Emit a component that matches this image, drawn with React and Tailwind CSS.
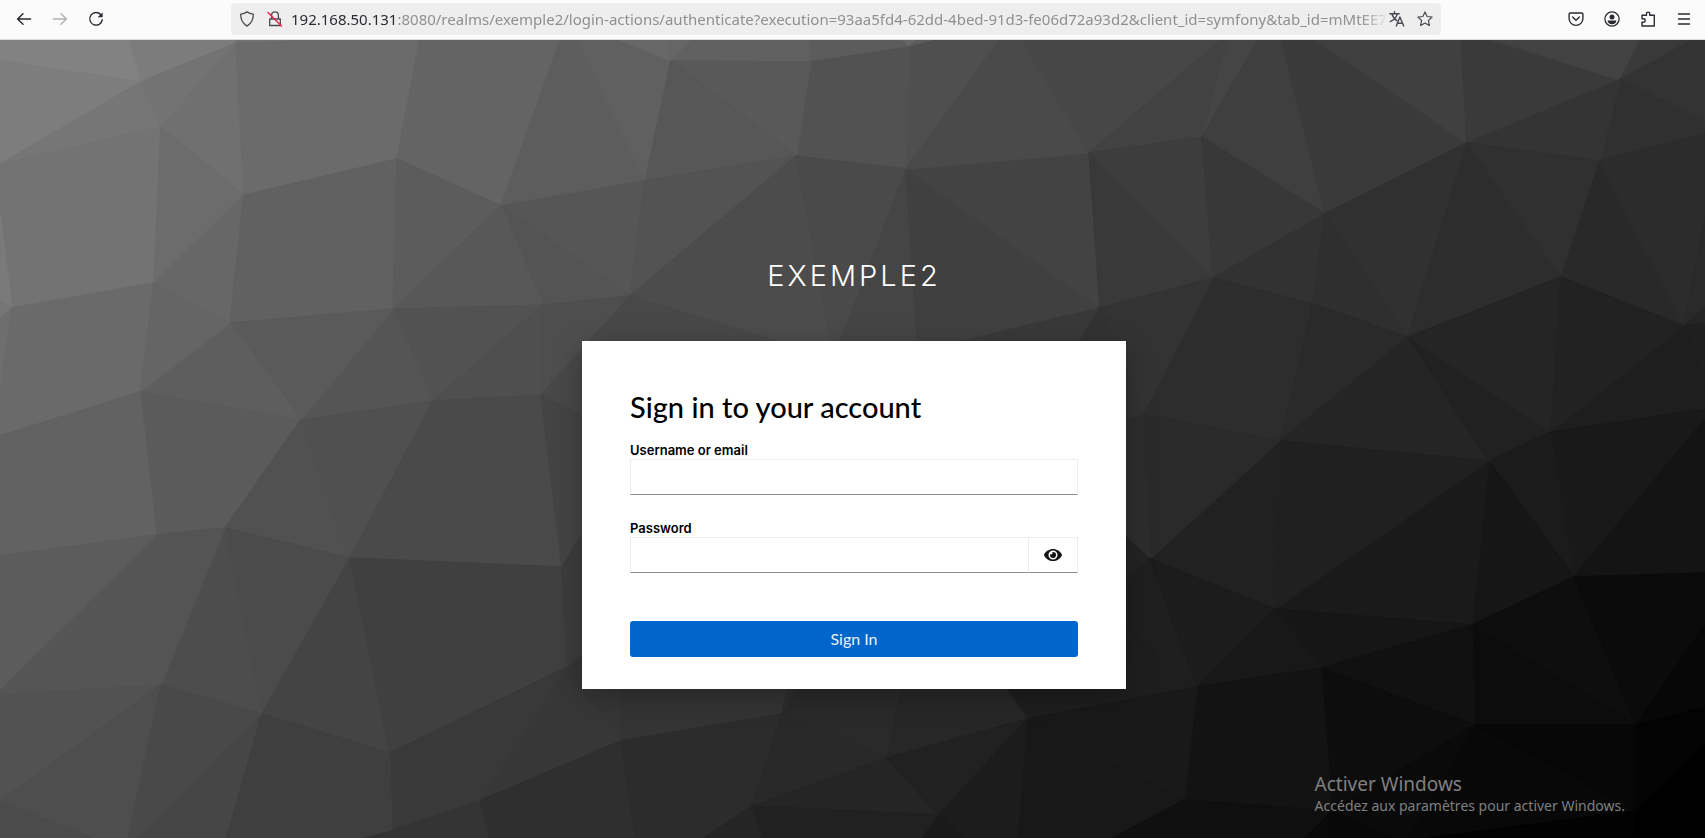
import { FaEye } from "react-icons/fa";

const V = {
  a: "0,61", b: "141,82", d: "161,127", e: "0,164", f: "236,43", g: "244,195", h: "397,159",
  j: "501,206", l: "154,283", m: "12,308", n: "230,323", o: "393,309", p: "140,392", q: "301,420",
  r: "433,401", s: "543,305", t: "541,395", u: "156,535", v: "225,528", w: "350,558", x: "562,567",
  z: "161,685", A: "262,714", B: "390,753", C: "567,667", D: "0,801", E: "392,831", F: "479,801",
  G: "671,61", H: "811,62", I: "910,47", J: "645,181", K: "796,156", L: "906,169", M: "1089,153",
  N: "630,296", O: "1100,308", P: "834,359", P2: "918,352", Q: "1143,414", R: "1202,137",
  S: "1325,214", T: "1467,143", U: "1620,80", W: "1213,278", V: "1600,161", X: "1313,304",
  Y: "1408,337", Z: "1561,277", AA: "1684,326", BB: "1551,432", CC: "1280,441", DD: "1150,559",
  EE: "1489,461", FF: "1574,577", GG: "1275,609", HH: "1472,625", II: "1321,668", JJ: "1197,687",
  KK: "1475,725", LL: "1636,725", MM: "1184,800", NN: "1332,811", OO: "1636,811", PP: "621,741",
  QQ: "782,714", RR: "887,758", SS: "1027,719", TT: "939,815", UU: "752,806",
};

const FACES = [
  ["#828282", "0,36 130,36 b a"], ["#7c7c7c", "129,36 236,36 f b"], ["#727272", "f 236,36 420,36"],
  ["#7d7d7d", "a b e"], ["#767676", "b d e"], ["#737373", "b f d"], ["#707070", "f g d"],
  ["#6b6b6b", "f 420,38 h g"], ["#646464", "420,38 561,38 j h"], ["#5d5d5d", "561,38 579,38 J j"],
  ["#606060", "578,38 618,38 G J"], ["#686868", "616,38 669,38 G"], ["#666666", "669,38 694,38 G"],
  ["#606060", "694,38 810,38 H G"], ["#5c5c5c", "810,38 904,38 I H"], ["#666666", "902,38 918,38 I"],
  ["#5c5c5c", "918,38 945,38 I"], ["#4f4f4f", "944,38 1002,38 L I"], ["#525252", "H I L K"],
  ["#595959", "G H K"], ["#575757", "G K J"], ["#565656", "j J N"], ["#545454", "j N s"],
  ["#535353", "J K N"], ["#4c4c4c", "K N P"], ["#4a4a4a", "K L P"], ["#454545", "L P P2"],
  ["#404040", "L P2 O"], ["#434343", "L M O"], ["#4a4a4a", "L 1001,38 1022,38 M"],
  ["#474747", "1021,38 1223,38 M"], ["#424242", "1223,38 1229,38 R M"], ["#454545", "1229,38 1259,38 R"],
  ["#3f3f3f", "1259,38 1281,38 S R"], ["#3a3a3a", "1281,38 1313,38 T S"], ["#404040", "1313,38 1461,38 T"],
  ["#3a3a3a", "1461,38 1489,38 U T"], ["#424242", "1486,38 1642,38 U"], ["#393939", "1642,38 1696,38 U"],
  ["#333333", "1696,38 1706,38 1706,122 U"], ["#303030", "U 1706,122 1706,133 V"], ["#343434", "U V T"],
  ["#3d3d3d", "M R W"], ["#393939", "M W O"], ["#383838", "R S W"], ["#323232", "S X W"],
  ["#313131", "S T Y"], ["#2f2f2f", "S Y X"], ["#2d2d2d", "T Z Y"], ["#303030", "T V Z"],
  ["#292929", "V AA Z"], ["#2c2c2c", "V 1706,133 1706,213 AA"], ["#2a2a2a", "AA 1706,213 1706,306"],
  ["#252525", "AA 1706,306 1706,323"], ["#1f1f1f", "AA 1706,323 1706,389"], ["#1e1e1e", "AA 1706,389 1706,409 BB"],
  ["#2d2d2d", "W X CC Q"], ["#333333", "O W Q"], ["#2a2a2a", "X Y CC"], ["#252525", "Y EE CC"],
  ["#212121", "Y BB EE"], ["#252525", "Y Z BB"], ["#222222", "Z AA BB"], ["#191919", "BB 1706,409 1706,418 FF"],
  ["#141414", "FF 1706,418 1706,573"], ["#1b1b1b", "BB FF EE"], ["#161616", "EE FF HH"], ["#1a1a1a", "EE HH GG"],
  ["#202020", "CC EE GG"], ["#212121", "CC GG DD"], ["#2a2a2a", "Q CC DD"], ["#2d2d2d", "Q DD 1080,497 1080,430"],
  ["#232323", "DD 1080,497 1080,620"], ["#1f1f1f", "DD 1080,620 JJ"], ["#1e1e1e", "1080,590 JJ SS 980,650"],
  ["#1c1c1c", "DD GG JJ"], ["#161616", "GG HH II"], ["#181818", "GG II JJ"], ["#0e0e0e", "HH FF LL"],
  ["#0b0b0b", "FF 1706,573 1706,624 LL"], ["#070707", "LL 1706,624 1706,707"], ["#030303", "LL 1706,707 1706,747 OO"],
  ["#000000", "OO 1706,747 1706,840 1633,840"], ["#0c0c0c", "HH LL KK"], ["#111111", "HH KK II"],
  ["#0d0d0d", "II KK NN"], ["#060606", "KK LL OO"], ["#080808", "KK OO 1413,840 1407,840"],
  ["#0a0a0a", "KK NN 1396,840 1407,840"], ["#131313", "JJ II NN MM"], ["#191919", "JJ MM SS"],
  ["#181818", "SS MM 1109,840 1017,840"], ["#0f0f0f", "MM NN 1303,840 1184,840"], ["#101010", "MM 1109,840 1184,840"],
  ["#090909", "NN 1303,840 1327,840"], ["#080808", "NN 1327,840 1396,840"], ["#020202", "OO 1413,840 1633,840"],
  ["#373737", "F PP C"], ["#363636", "C PP 621,600"], ["#343434", "PP QQ 796,640 621,600"],
  ["#2e2e2e", "QQ 796,640 834,640"], ["#2a2a2a", "QQ RR 912,640 834,640"], ["#272727", "RR SS 980,650 912,640"],
  ["#2f2f2f", "F PP 636,840 489,840"], ["#2c2c2c", "PP QQ UU 701,840 636,840"], ["#292929", "QQ RR UU"],
  ["#252525", "RR UU TT"], ["#212121", "RR SS TT"], ["#212121", "UU TT 921,840 762,840"], ["#252525", "UU 701,840 762,840"],
  ["#1c1c1c", "TT SS 1017,840 965,840"], ["#1a1a1a", "TT 921,840 965,840"],
  ["#737373", "e d l m 0,213"], ["#7a7a7a", "0,213 m 0,301"], ["#757575", "0,301 m 0,319"], ["#6e6e6e", "0,319 m 0,395"],
  ["#6a6a6a", "m l p 0,436 0,395"], ["#6c6c6c", "d g l"], ["#676767", "l g n"], ["#616161", "g h o n"],
  ["#5c5c5c", "h j o"], ["#585858", "o j s"], ["#525252", "o s r"], ["#555555", "o r q"], ["#5a5a5a", "n o q"],
  ["#5e5e5e", "p n q"], ["#656565", "l n p"], ["#4f4f4f", "s r t"], ["#4e4e4e", "s t N"],
  ["#5b5b5b", "p q v u"], ["#626262", "0,436 p u 0,556"], ["#515151", "q w v"], ["#505050", "q r w"],
  ["#4a4a4a", "r t x w"], ["#4b4b4b", "v w A"], ["#4d4d4d", "v A z"], ["#545454", "u v z"], ["#555555", "u z 0,695 0,689"],
  ["#5c5c5c", "0,556 u 0,689"], ["#444444", "w A B"], ["#404040", "w x C B"], ["#393939", "C B E F"],
  ["#525252", "0,695 z D"], ["#4e4e4e", "D z 128,840 97,840"], ["#4b4b4b", "D 97,840 0,840"],
  ["#494949", "z A 137,840 128,840"], ["#464646", "A 226,840 137,840"], ["#3f3f3f", "A B E 358,840 226,840"],
  ["#343434", "E F 489,840 358,840"], ["#484848", "N t 640,445 P"], ["#444444", "t 640,445 x"],
  ["#3c3c3c", "x 640,440 640,600 C"], ["#393939", "P P2 O 1060,400 900,420"], ["#323232", "O 1050,390 1080,430 Q"],
];

function toPoints(face) {
  return face.split(" ").map((k) => V[k] || k).join(" ");
}

function Backdrop() {
  return (
    <svg
      aria-hidden="true"
      className="absolute inset-0 h-full w-full"
      viewBox="0 40 1705 798"
      preserveAspectRatio="xMidYMid slice"
    >
      {FACES.map(([fill, face]) => (
        <polygon key={face} points={toPoints(face)} fill={fill} stroke={fill} strokeWidth="1.4" strokeLinejoin="round" />
      ))}
    </svg>
  );
}

function Icon({ children, className = "" }) {
  return (
    <svg
      aria-hidden="true"
      viewBox="0 0 16 16"
      className={"size-4 shrink-0 " + className}
      fill="none"
      stroke="currentColor"
      strokeWidth="1.3"
      strokeLinecap="round"
      strokeLinejoin="round"
    >
      {children}
    </svg>
  );
}

function BarButton({ label, children, className = "" }) {
  return (
    <button type="button" aria-label={label} className={"flex h-8 items-center justify-center " + className}>
      {children}
    </button>
  );
}

function Toolbar() {
  return (
    <header className="flex h-10 items-center border-b border-[#dcdcdc] bg-[#fbfbfb] pb-px text-[#2b2a33]">
      <nav className="flex w-[231px] shrink-0 pl-1.5">
        <BarButton label="Back" className="w-9">
          <Icon><path d="M14.5 8H1.8M7 2.8 1.6 8 7 13.2" strokeWidth="1.5" /></Icon>
        </BarButton>
        <BarButton label="Forward" className="w-9 text-[#b2b2b5]">
          <Icon><path d="M1.5 8h12.7M9 2.8 14.4 8 9 13.2" strokeWidth="1.5" /></Icon>
        </BarButton>
        <BarButton label="Reload" className="w-9">
          <Icon>
            <path d="M13.2 4.2A6.3 6.3 0 1 0 14.3 8.6" strokeWidth="1.4" />
            <path d="M14.6 1.4v4.9H9.6z" fill="currentColor" stroke="none" />
          </Icon>
        </BarButton>
      </nav>
      <div className="flex h-8 min-w-0 flex-1 items-center rounded bg-[#eeeeee] pl-2 text-[#4a4a52]">
        <Icon><path d="M8 .9c2 1.4 4 2 6.3 2.2.1 5.2-1.8 9.4-6.3 12C3.5 12.5 1.6 8.3 1.7 3.1 4 2.9 6 2.3 8 .9z" /></Icon>
        <Icon className="ml-3">
          <path d="M4.6 7V4.2a3.4 3.4 0 0 1 6.8 0V7M2.7 8v6.5h10.600V8H2.700z" />
          <path d="M1 1.500 14.500 15" stroke="#f0204c" strokeWidth="1.4" />
        </Icon>
        <p className="ml-2 min-w-0 flex-1 overflow-hidden font-['Noto_Sans',sans-serif] text-[15px] leading-5 whitespace-nowrap text-[#909092] [mask-image:linear-gradient(to_left,transparent,black_28px)]">
          <span className="text-[#2b2a33]">192.168.50.131</span>
          :8080/realms/exemple2/login-actions/authenticate?execution=93aa5fd4-62dd-4bed-91d3-fe06d72a93d2&amp;client_id=symfony&amp;tab_id=mMtEE7e
        </p>
        <BarButton label="Translate" className="mr-1.5 w-4">
          <Icon>
            <path d="M.8 2.8h9.4M5.5.8v2M8.3 2.8C7.6 6 5 8.8 1.3 10.6M2.9 2.8C3.8 6 5.6 8.3 8 9.8" strokeWidth="1.4" />
            <path d="m7.3 15 3.6-9 3.8 9M8.6 12.3h4.8" strokeWidth="1.4" />
          </Icon>
        </BarButton>
        <BarButton label="Bookmark" className="mr-0.5 w-7">
          <Icon><path d="m8 .9 2.1 4.6 5 .6-3.7 3.4 1 5L8 12l-4.4 2.5 1-5L.9 6.1l5-.6z" strokeWidth="1.2" /></Icon>
        </BarButton>
      </div>
      <nav className="flex w-[264px] shrink-0 justify-end pr-[3px]">
        <BarButton label="Save to Pocket" className="w-9">
          <Icon><path d="M2.3 2h11.4c.7 0 1.2.5 1.2 1.2v4.3a6.9 6.9 0 0 1-13.8 0V3.2C1.1 2.5 1.6 2 2.3 2zM4.6 6 8 9.2 11.4 6" strokeWidth="1.4" /></Icon>
        </BarButton>
        <BarButton label="Account" className="w-9">
          <Icon>
            <circle cx="8" cy="8" r="7.1" />
            <circle cx="8" cy="5.9" r="2.5" fill="currentColor" stroke="none" />
            <path d="M3.6 9.5h8.8c0 2.3-2 3.7-4.4 3.7s-4.4-1.4-4.4-3.7z" fill="currentColor" stroke="none" />
          </Icon>
        </BarButton>
        <BarButton label="Extensions" className="w-9">
          <Icon><path d="M2 15v-3.8h1.5a1.7 1.7 0 0 0 0-3.500H2V4.200h4.500V2.700a1.600 1.600 0 0 1 3.200 0v1.500h4.600V15z" strokeWidth="1.4" /></Icon>
        </BarButton>
        <BarButton label="Menu" className="w-9">
          <Icon><path d="M2.5 3h11M2.5 8h11M2.5 13h11" strokeWidth="1.4" /></Icon>
        </BarButton>
      </nav>
    </header>
  );
}

const fieldClass = "h-9 min-w-0 border border-[#ededed] border-b-[#8a8d90] bg-white px-2 text-base outline-none";
const labelClass = "font-['Inter',sans-serif] text-[13px] leading-[18px] font-semibold";

function LoginCard() {
  return (
    <form
      className="flex w-full max-w-[544px] flex-col bg-white px-12 pt-11 pb-8 text-black shadow-[0_8px_28px_rgba(3,3,3,0.25)]"
      onSubmit={(e) => e.preventDefault()}
    >
      <h1 className="text-[29px] leading-11 font-medium">Sign in to your account</h1>
      <label htmlFor="username" className={labelClass + " mt-3"}>Username or email</label>
      <input id="username" type="text" className={fieldClass} />
      <label htmlFor="password" className={labelClass + " mt-6"}>Password</label>
      <div className="flex">
        <input id="password" type="password" className={fieldClass + " flex-1 border-r-0"} />
        <button type="button" aria-label="Show password" className="flex h-9 w-[50px] items-center justify-center border border-[#ededed] border-b-[#8a8d90] text-[#151515]">
          <FaEye size={18} />
        </button>
      </div>
      <button type="submit" className="mt-12 h-9 rounded-[3px] bg-[#0066cc] text-base text-[#e8f1fa]">Sign In</button>
    </form>
  );
}

export default function App() {
  return (
    <div className="flex min-h-screen flex-col bg-[#2a2a2a] font-['Lato',sans-serif]">
      <Toolbar />
      <main className="relative flex flex-1 flex-col overflow-hidden pl-[3px]">
        <Backdrop />
        <div className="relative flex flex-col items-center pt-[215px]">
          <div className="mb-11 font-['Inter',sans-serif] text-[29px] leading-[42px] font-light tracking-[3px] text-white uppercase">
            exemple2
          </div>
          <LoginCard />
        </div>
        <aside className="absolute right-20 bottom-[22px] font-['Noto_Sans',sans-serif] text-[#808080]">
          <p className="text-[19px] leading-6">Activer Windows</p>
          <p className="text-sm leading-5">Accédez aux paramètres pour activer Windows.</p>
        </aside>
      </main>
    </div>
  );
}
